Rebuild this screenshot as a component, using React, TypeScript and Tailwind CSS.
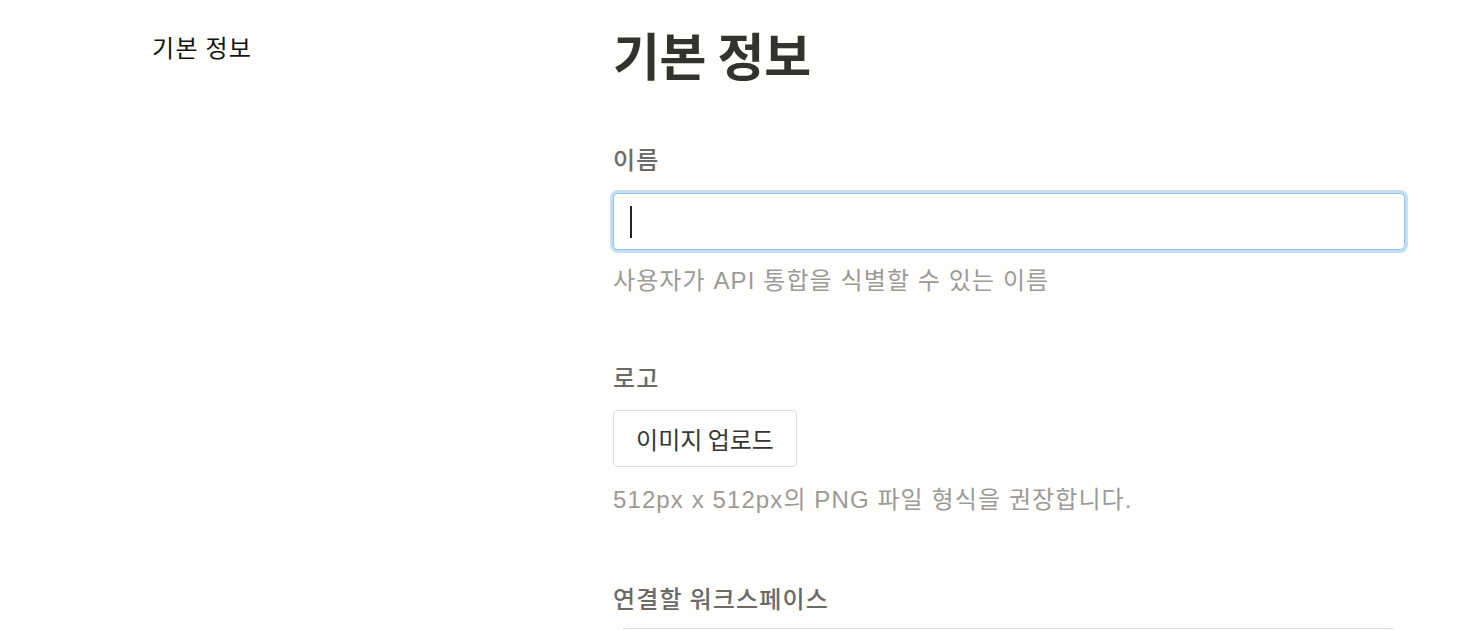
import React from "react";

const kr = { fontFamily: '"Noto Sans CJK KR", "Noto Sans", sans-serif' };
const mix = { fontFamily: '"Liberation Sans", "Noto Sans CJK KR", sans-serif' };

export default function App() {
  return (
    <div className="w-[1466px] h-[630px] overflow-hidden bg-[#fffefd] flex" style={kr}>
      <div className="w-[613px] shrink-0 pl-[152px] pt-[31px]">
        <div className="text-[24px] leading-[32px] text-[#111111] tracking-[1.3px]">기본 정보</div>
      </div>
      <div className="w-[793px] shrink-0 pt-[22px]">
        <h1 className="text-[51px] leading-[64px] font-bold text-[#34322d] tracking-[-0.3px]">기본 정보</h1>
        <div className="mt-[57px] text-[24px] leading-[32px] font-medium text-[#6b6a67] tracking-[1.2px]">이름</div>
        <div className="mt-[18px] h-[57px] w-[792px] rounded-[5px] border border-[#92c4e5] bg-white flex items-center pl-[16px] shadow-[0_0_0_3px_#c3dff1]">
          <span className="block w-[2px] h-[32px] bg-[#222222]" />
        </div>
        <div className="mt-[15px] text-[24px] leading-[32px] text-[#9b9a97] tracking-[1.1px]" style={mix}>
          사용자가 API 통합을 식별할 수 있는 이름
        </div>
        <div className="mt-[64px] text-[24px] leading-[32px] font-medium text-[#6b6a67] tracking-[1.2px]">로고</div>
        <button className="mt-[17px] h-[57px] w-[184px] rounded-[4px] border border-[#e0dfdc] bg-white text-[24px] leading-[32px] text-[#37352f] flex items-center justify-center">
          이미지 업로드
        </button>
        <div className="mt-[17px] text-[24px] leading-[32px] text-[#9b9a97] tracking-[1.1px]" style={mix}>
          512px x 512px의 PNG 파일 형식을 권장합니다.
        </div>
        <div className="mt-[66px] text-[24px] leading-[32px] font-medium text-[#6b6a67] tracking-[1.2px]">연결할 워크스페이스</div>
        <div className="mt-[14px] ml-[9px] w-[773px] h-[57px] rounded-[4px] border border-[#dedddb] bg-white" />
      </div>
    </div>
  );
}
